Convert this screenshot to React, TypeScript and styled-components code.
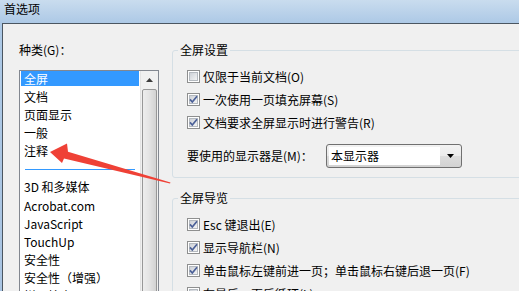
import React from 'react';
import styled, { createGlobalStyle } from 'styled-components';

const GlobalStyle = createGlobalStyle`
  html, body {
    margin: 0;
    padding: 0;
  }
  body {
    width: 519px;
    height: 291px;
    overflow: hidden;
    font-family: "Noto Sans CJK SC", "Microsoft YaHei", sans-serif;
    font-size: 12px;
    color: #000;
  }
`;

const categories = ['全屏', '文档', '页面显示', '一般', '注释'];
const moreCategories = ['3D 和多媒体', 'Acrobat.com', 'JavaScript', 'TouchUp', '安全性', '安全性（增强）', '拼写检查'];

const screenOptions = [
  { label: '仅限于当前文档(O)', checked: false },
  { label: '一次使用一页填充屏幕(S)', checked: true },
  { label: '文档要求全屏显示时进行警告(R)', checked: true },
];

const navOptions = [
  { label: 'Esc 键退出(E)', checked: true },
  { label: '显示导航栏(N)', checked: true },
  { label: '单击鼠标左键前进一页；单击鼠标右键后退一页(F)', checked: true },
  { label: '在最后一页后循环(L)', checked: false },
];

const Window = styled.div`
  position: relative;
  width: 519px;
  height: 291px;
  overflow: hidden;
  background: linear-gradient(180deg, #c9dcee 0, #adc9e6 23px, #a9c4e2 100%);
`;

const TitleBar = styled.div`
  height: 23px;
  box-sizing: border-box;
  padding: 1px 0 0 4px;
  line-height: 16px;
  font-size: 12px;
  color: #000;
`;

const Dialog = styled.div`
  margin-left: 2px;
  height: 268px;
  box-sizing: border-box;
  border-top: 1px solid #4b5661;
  border-left: 1px solid #4b5661;
  background: #f0f0f0;
  display: flex;
  padding: 18px 0 0 16px;
`;

const LeftColumn = styled.div`
  width: 140px;
  flex-shrink: 0;
  display: flex;
  flex-direction: column;
`;

const CategoryLabel = styled.div`
  height: 16px;
  line-height: 16px;
  margin-bottom: 12px;
`;

const ListBox = styled.div`
  width: 140px;
  height: 240px;
  box-sizing: border-box;
  border: 1px solid #828790;
  background: #fff;
  display: flex;
`;

const Items = styled.div`
  width: 120px;
  box-sizing: border-box;
  padding: 0 1px;
  display: flex;
  flex-direction: column;
  gap: 3.1px;
`;

const Item = styled.div<{ $selected?: boolean }>`
  height: 15px;
  line-height: 15px;
  padding-left: 3px;
  white-space: nowrap;
  background: ${(p) => (p.$selected ? '#3399ff' : 'transparent')};
  color: ${(p) => (p.$selected ? '#fff' : '#000')};
`;

const Separator = styled.div`
  height: 1px;
  flex-shrink: 0;
  background: #3399ff;
  margin: 7.5px 4px 6.4px 4px;
`;

const ScrollBar = styled.div`
  width: 18px;
  box-sizing: border-box;
  border-left: 1px solid #e3e3e3;
  background: #f0f0f0;
  display: flex;
  flex-direction: column;
`;

const ScrollButton = styled.div`
  height: 18px;
  display: flex;
  align-items: center;
  justify-content: center;
`;

const ScrollThumb = styled.div`
  flex: 1;
  margin: 0 1px;
  border: 1px solid #979797;
  border-radius: 2px 2px 0 0;
  background: linear-gradient(90deg, #ededed 0%, #e4e4e4 45%, #d2d2d2 100%);
`;

const RightColumn = styled.div`
  width: 360px;
  flex-shrink: 0;
  margin-left: 13px;
  display: flex;
  flex-direction: column;
`;

const Group = styled.fieldset<{ $spaced?: boolean }>`
  margin: ${(p) => (p.$spaced ? '12px' : '0')} 0 0 0;
  padding: 7px 0 9px 14px;
  border: 1px solid #d5dfe5;
  border-radius: 3px;
  min-width: 0;
`;

const Legend = styled.legend`
  padding: 0 2px;
  margin-left: -9px;
  line-height: 16px;
`;

const CheckRow = styled.div`
  height: 23px;
  display: flex;
  align-items: center;
  gap: 3px;
  white-space: nowrap;
  line-height: 16px;
`;

const SelectRow = styled.div`
  margin-top: 10px;
  display: flex;
  align-items: center;
`;

const SelectLabel = styled.div`
  width: 139px;
  line-height: 16px;
  white-space: nowrap;
`;

const SelectBox = styled.div`
  width: 136px;
  height: 24px;
  box-sizing: border-box;
  border: 1px solid #707070;
  border-radius: 3px;
  display: flex;
  background: linear-gradient(180deg, #f2f2f2 0%, #ebebeb 50%, #dddddd 51%, #d2d2d2 100%);
`;

const SelectValue = styled.div`
  flex: 1;
  margin: 2px 0 2px 2px;
  padding-left: 2px;
  background: #fff;
  line-height: 18px;
`;

const SelectArrow = styled.div`
  width: 21px;
  display: flex;
  align-items: center;
  justify-content: center;
`;

const Overlay = styled.svg`
  position: absolute;
  left: 0;
  top: 0;
  pointer-events: none;
`;

const CheckBox = ({ checked }: { checked: boolean }) => (
  <svg width="13" height="13" viewBox="0 0 13 13" style={{ flexShrink: 0 }}>
    <defs>
      <linearGradient id="cbg" x1="0" y1="0" x2="1" y2="1">
        <stop offset="0" stopColor="#cbcfd5" />
        <stop offset="1" stopColor="#f6f6f6" />
      </linearGradient>
    </defs>
    <rect x="0.5" y="0.5" width="12" height="12" fill="#fff" stroke="#8e8f8f" />
    <rect x="2.5" y="2.5" width="8" height="8" fill="url(#cbg)" stroke="#b4b9bf" />
    {checked && (
      <path d="M3 6.4 L5.3 9 L10 3.2" fill="none" stroke="#4a5f97" strokeWidth="1.7" />
    )}
  </svg>
);

const Option = ({ label, checked }: { label: string; checked: boolean }) => (
  <CheckRow>
    <CheckBox checked={checked} />
    <span>{label}</span>
  </CheckRow>
);

const App = () => {
  return (
    <Window>
      <GlobalStyle />
      <TitleBar>首选项</TitleBar>
      <Dialog>
        <LeftColumn>
          <CategoryLabel>种类(G)：</CategoryLabel>
          <ListBox>
            <Items>
              {categories.map((name, idx) => (
                <Item key={name} $selected={idx === 0}>
                  {name}
                </Item>
              ))}
              <Separator />
              {moreCategories.map((name) => (
                <Item key={name}>{name}</Item>
              ))}
            </Items>
            <ScrollBar>
              <ScrollButton>
                <svg width="7" height="4" viewBox="0 0 7 4">
                  <path d="M0 4 L3.5 0 L7 4 Z" fill="#3c3c3c" />
                </svg>
              </ScrollButton>
              <ScrollThumb />
            </ScrollBar>
          </ListBox>
        </LeftColumn>

        <RightColumn>
          <Group>
            <Legend>全屏设置</Legend>
            {screenOptions.map((opt) => (
              <Option key={opt.label} {...opt} />
            ))}
            <SelectRow>
              <SelectLabel>要使用的显示器是(M)：</SelectLabel>
              <SelectBox>
                <SelectValue>本显示器</SelectValue>
                <SelectArrow>
                  <svg width="7" height="4" viewBox="0 0 7 4">
                    <path d="M0 0 L7 0 L3.5 4 Z" fill="#000" />
                  </svg>
                </SelectArrow>
              </SelectBox>
            </SelectRow>
          </Group>

          <Group $spaced>
            <Legend>全屏导览</Legend>
            {navOptions.map((opt) => (
              <Option key={opt.label} {...opt} />
            ))}
          </Group>
        </RightColumn>
      </Dialog>

      {/* red annotation arrow pointing at 注释 */}
      <Overlay width="519" height="291" viewBox="0 0 519 291">
        <polygon
          points="50,152 67,143.5 68,151.8 170.5,182.6 170,183.6 64,158.4 62,163"
          fill="#ef4136"
        />
      </Overlay>
    </Window>
  );
};

export default App;
